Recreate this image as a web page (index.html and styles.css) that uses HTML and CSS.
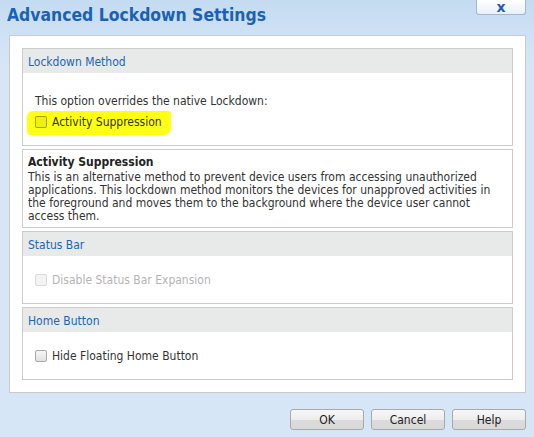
FILE: index.html
```html
<!DOCTYPE html>
<html>
<head>
<meta charset="utf-8">
<link rel="stylesheet" href="styles.css">
</head>
<body>
<div class="dialog">
  <div class="titlebar">
    <h1 class="title">Advanced Lockdown Settings</h1>
    <button class="close" type="button">x</button>
  </div>
  <div class="panel">
    <section class="group">
      <div class="group-head">Lockdown Method</div>
      <div class="group-body method-body">
        <p class="note">This option overrides the native Lockdown:</p>
        <label class="check highlight"><span class="box"></span>Activity Suppression</label>
      </div>
    </section>
    <section class="desc">
      <div class="desc-title">Activity Suppression</div>
      <p class="desc-text">This is an alternative method to prevent device users from accessing unauthorized applications. This lockdown method monitors the devices for unapproved activities in the foreground and moves them to the background where the device user cannot access them.</p>
    </section>
    <section class="group">
      <div class="group-head">Status Bar</div>
      <div class="group-body">
        <label class="check disabled"><span class="box"></span>Disable Status Bar Expansion</label>
      </div>
    </section>
    <section class="group">
      <div class="group-head">Home Button</div>
      <div class="group-body">
        <label class="check"><span class="box"></span>Hide Floating Home Button</label>
      </div>
    </section>
  </div>
  <div class="actions">
    <button class="btn" type="button">OK</button>
    <button class="btn" type="button">Cancel</button>
    <button class="btn" type="button">Help</button>
  </div>
</div>
</body>
</html>
```
FILE: styles.css
```css
html, body {
  margin: 0;
  height: 100%;
}
body {
  background: linear-gradient(#c4dbf1 0px, #d2e3f5 45px, #d6e6f6 70px, #d6e6f6 100%);
  font-family: "DejaVu Sans Condensed", "DejaVu Sans", sans-serif;
  font-size: 12px;
  color: #333;
}
.dialog {
  display: flex;
  flex-direction: column;
  height: 437px;
}
.titlebar {
  display: flex;
  justify-content: space-between;
  align-items: flex-start;
  height: 35px;
  padding: 0 8px 0 7px;
}
.title {
  margin: 5px 0 0;
  font-size: 17.4px;
  font-weight: bold;
  color: #1b62b4;
  line-height: 20px;
}
.close {
  width: 50px;
  height: 15px;
  margin: 0;
  padding: 0 0 1px;
  border: 1px solid #a3b8cc;
  border-top: none;
  border-radius: 0 0 3px 3px;
  background: linear-gradient(#ffffff, #e8f0f8);
  color: #1d5ea8;
  font-family: "DejaVu Sans", sans-serif;
  font-weight: bold;
  font-size: 14px;
  line-height: 14px;
}
.panel {
  margin: 0 8px 0 9px;
  padding: 12px;
  background: #fff;
  border: 1px solid #cacaca;
  display: flex;
  flex-direction: column;
  gap: 3px;
}
.group, .desc {
  border: 1px solid #cccccc;
}
.group-head {
  background: #e8e9e9;
  color: #1a66b6;
  font-size: 12px;
  height: 22px;
  line-height: 22px;
  padding: 2px 0 0 5px;
}
.group-body {
  display: flex;
  flex-direction: column;
  align-items: flex-start;
  padding: 17px 12px 16px;
}
.method-body {
  padding: 21px 12px 10px 12px;
}
.note {
  margin: 0 0 3px;
  line-height: 14px;
}
.check {
  display: flex;
  align-items: center;
  gap: 5px;
  height: 14px;
  line-height: 14px;
  color: #333;
}
.box {
  width: 10px;
  height: 10px;
  border: 1px solid #a8a8a8;
  border-radius: 2px;
  background: linear-gradient(#f6f6f6, #e2e2e2);
}
.highlight {
  background: #ffff14;
  margin-left: -8px;
  padding: 4px 9px 6px 8px;
  border-radius: 6px 3px 7px 4px;
}
.highlight .box {
  border-color: rgba(70, 70, 0, 0.45);
  background: rgba(120, 120, 0, 0.12);
}
.disabled {
  color: #b4b4b4;
}
.disabled .box {
  border-color: #dcdcdc;
  background: #f3f3f3;
}
.desc {
  padding: 5px 12px 4px 5px;
}
.desc-title {
  font-weight: bold;
  font-size: 12px;
  line-height: 14px;
  margin-bottom: 2px;
  color: #222;
}
.desc-text {
  margin: 0;
  line-height: 13px;
}
.actions {
  display: flex;
  justify-content: flex-end;
  gap: 7px;
  padding: 16px 8px 0 0;
}
.btn {
  width: 74px;
  height: 21px;
  margin: 0;
  padding: 0;
  border: 1px solid #a9a9a9;
  border-radius: 3px;
  background: linear-gradient(#f7f7f7 0%, #ededed 50%, #dcdcdc 51%, #d8d8d8 100%);
  font-family: "DejaVu Sans Condensed", "DejaVu Sans", sans-serif;
  font-size: 12px;
  color: #222;
}
```
